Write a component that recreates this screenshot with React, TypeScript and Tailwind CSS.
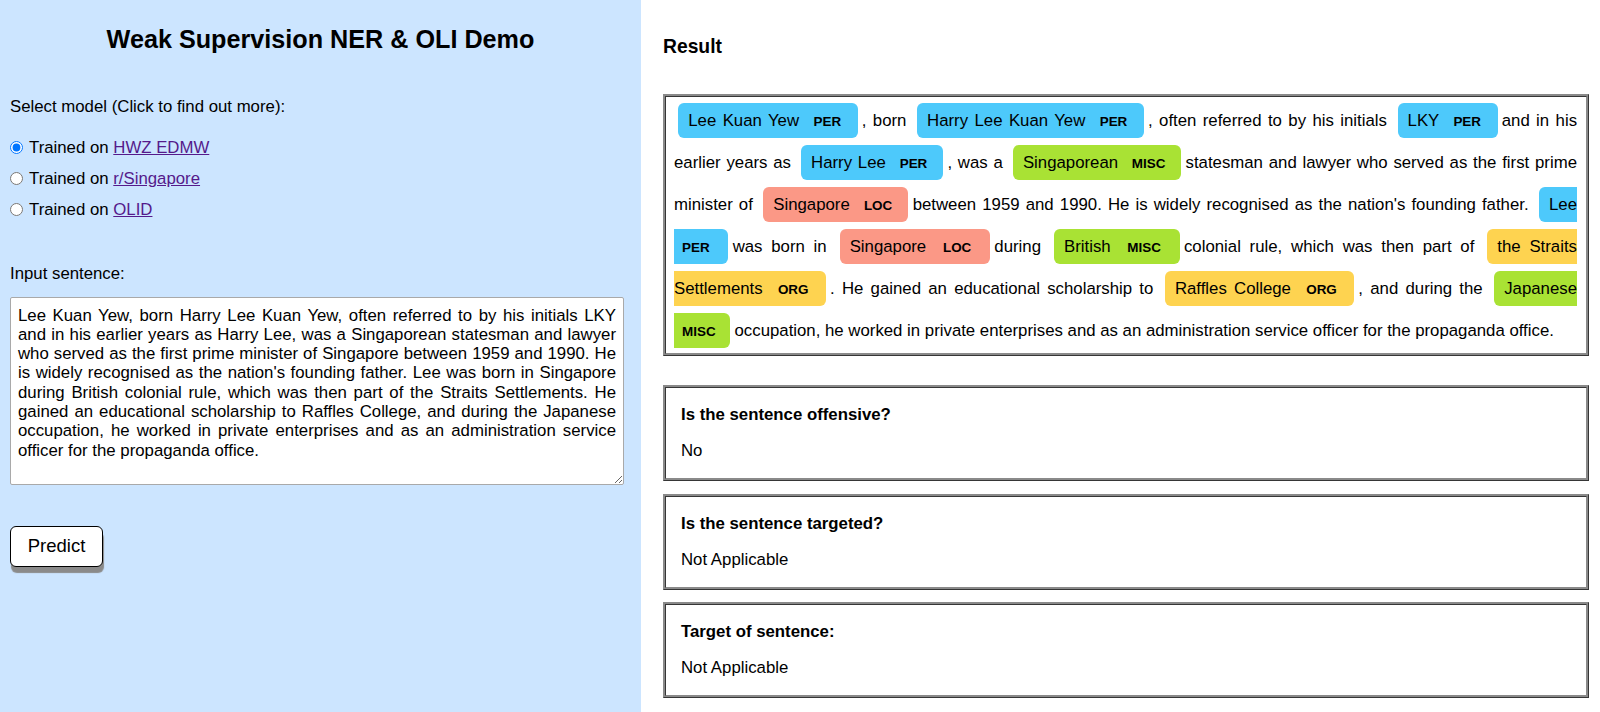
import React from "react";

const colors: Record<string, string> = {
  PER: "bg-[#4dc9fb]",
  MISC: "bg-[#a9e234]",
  LOC: "bg-[#fb9886]",
  ORG: "bg-[#fed350]",
};

function Ent({ text, label }: { text: string; label: string }) {
  return (
    <mark
      className={`${colors[label]} text-black px-[0.6em] py-[0.45em] mx-[0.25em] leading-none rounded-[0.35em]`}
    >
      {text}{" "}
      <span className="text-[0.8em] font-bold leading-none align-middle ml-2 uppercase">{label}</span>{" "}
    </mark>
  );
}

function Answer({ title, value }: { title: string; value: string }) {
  return (
    <div className="h-[96px] border-[3px] [border-style:ridge] border-[#8a8a8a] px-[15px] pt-[17px]">
      <div className="font-bold leading-[19.3px]">{title}</div>
      <div className="mt-[17px] leading-[19.3px]">{value}</div>
    </div>
  );
}

const sentence =
  "Lee Kuan Yew, born Harry Lee Kuan Yew, often referred to by his initials LKY and in his earlier years as Harry Lee, was a Singaporean statesman and lawyer who served as the first prime minister of Singapore between 1959 and 1990. He is widely recognised as the nation's founding father. Lee was born in Singapore during British colonial rule, which was then part of the Straits Settlements. He gained an educational scholarship to Raffles College, and during the Japanese occupation, he worked in private enterprises and as an administration service officer for the propaganda office.";

const models = [
  { name: "HWZ EDMW", checked: true },
  { name: "r/Singapore", checked: false },
  { name: "OLID", checked: false },
];

export default function App() {
  return (
    <div className="flex h-[712px] font-['Liberation_Sans',Arial,sans-serif] text-[16.8px] text-black">
      {/* left: input form */}
      <div className="w-[641px] shrink-0 bg-[#cce5ff] px-[10px]">
        <h2 className="pt-[25px] text-center font-bold text-[25.2px] leading-[29px]">
          Weak Supervision NER &amp; OLI Demo
        </h2>
        <p className="mt-[43px] leading-[19.3px]">Select model (Click to find out more):</p>
        <div className="mt-[16px]">
          {models.map((m) => (
            <label key={m.name} className="flex items-center h-[31px]">
              <input type="radio" name="model" defaultChecked={m.checked} className="w-[13px] h-[13px] mr-[6px]" />
              <span>
                Trained on{" "}
                <a href="#" className="text-[#551a8b] underline">
                  {m.name}
                </a>
              </span>
            </label>
          ))}
        </div>
        <p className="mt-[39px] leading-[19.3px]">Input sentence:</p>
        <textarea
          className="mt-[13px] block w-[614px] h-[188px] bg-white border border-[#a9a9a9] rounded-[2px] px-[7px] py-[8px] leading-[19.3px] text-justify"
          defaultValue={sentence}
        />
        <button className="mt-[41px] w-[93px] h-[41px] bg-white border border-black rounded-[6px] text-[18.5px] shadow-[1px_6px_1px_#8a8a8a]">
          Predict
        </button>
      </div>

      {/* right: results */}
      <div className="flex-1 bg-white pl-[22px] pr-[11px]">
        <h3 className="mt-[36px] font-bold text-[19.3px] leading-[22px]">Result</h3>
        <div className="mt-[36px] border-[3px] [border-style:ridge] border-[#8a8a8a] pl-[8px] pr-[9px] pt-[3px] pb-[1px] leading-[42px] text-justify">
          <Ent text="Lee Kuan Yew" label="PER" />, born <Ent text="Harry Lee Kuan Yew" label="PER" />, often referred
          to by his initials <Ent text="LKY" label="PER" /> and in his earlier years as{" "}
          <Ent text="Harry Lee" label="PER" />, was a <Ent text="Singaporean" label="MISC" /> statesman and lawyer who
          served as the first prime minister of <Ent text="Singapore" label="LOC" /> between 1959 and 1990. He is
          widely recognised as the nation's founding father. <Ent text="Lee" label="PER" /> was born in{" "}
          <Ent text="Singapore" label="LOC" /> during <Ent text="British" label="MISC" /> colonial rule, which was then
          part of <Ent text="the Straits Settlements" label="ORG" />. He gained an educational scholarship to{" "}
          <Ent text="Raffles College" label="ORG" />, and during the <Ent text="Japanese" label="MISC" /> occupation, he
          worked in private enterprises and as an administration service officer for the propaganda office.
        </div>
        <div className="mt-[29px] flex flex-col gap-[12.5px]">
          <Answer title="Is the sentence offensive?" value="No" />
          <Answer title="Is the sentence targeted?" value="Not Applicable" />
          <Answer title="Target of sentence:" value="Not Applicable" />
        </div>
      </div>
    </div>
  );
}
